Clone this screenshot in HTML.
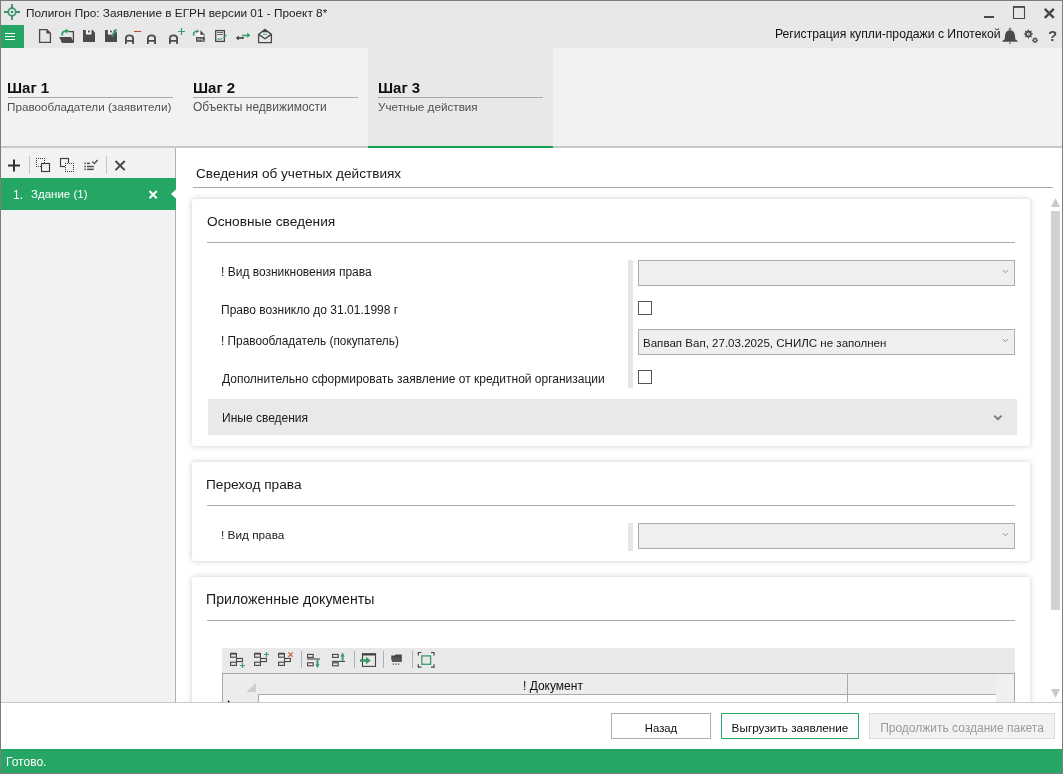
<!DOCTYPE html>
<html><head><meta charset="utf-8">
<style>
*{box-sizing:border-box;margin:0;padding:0}
html,body{-webkit-font-smoothing:antialiased;width:1063px;height:774px;overflow:hidden;background:#fff;font-family:"Liberation Sans",sans-serif;color:#1a1a1a;position:relative}
.a{position:absolute;white-space:nowrap}
.stt{font-size:15px;font-weight:700;color:#111}
.sts{font-size:11.7px;color:#505050}
.stu{height:1px;background:#a8a8a8}
.card{position:absolute;background:#fff;border-radius:2px;box-shadow:0 0 6px rgba(0,0,0,0.19),0 0 1px rgba(0,0,0,0.12)}
.hdr{font-size:13.7px;color:#1a1a1a}
.hl{position:absolute;height:1px;background:#a9a9b1}
.lbl{font-size:12px;color:#1a1a1a}
.combo{position:absolute;background:#efefef;border:1px solid #acacb4}
.chk{position:absolute;width:14px;height:14px;border:1px solid #555;background:#fff}
.btn{position:absolute;height:26px;border:1px solid #adadb5;background:#fff;font-size:12px;text-align:center;line-height:24px;padding-top:2px;color:#111}
#root{position:absolute;left:0;top:0;width:1063px;height:774px;will-change:transform}
</style></head><body><div id="root">
 <!-- title + toolbar -->
 <div class="a" style="left:0;top:0;width:1063px;height:48px;background:#e8e8e8"></div>
 <div class="a" style="left:1px;top:25px;width:23px;height:23px;background:#25a664"></div>
 <div class="a" style="left:5px;top:33px;width:10px;height:1px;background:#fff"></div>
 <div class="a" style="left:5px;top:36px;width:10px;height:1px;background:#fff"></div>
 <div class="a" style="left:5px;top:39px;width:10px;height:1px;background:#fff"></div>
 <div class="a" style="left:26px;top:6px;font-size:11.8px;color:#222">Полигон Про: Заявление в ЕГРН версии 01 - Проект 8*</div>
 <div class="a" style="left:775px;top:27px;font-size:12.2px;color:#111">Регистрация купли-продажи с Ипотекой</div>

 <!-- steps -->
 <div class="a" style="left:0;top:48px;width:1063px;height:98px;background:#f2f2f2"></div>
 <div class="a" style="left:368px;top:48px;width:185px;height:98px;background:#e8e8e8"></div>
 <div class="a" style="left:0;top:146px;width:1063px;height:2px;background:#c9c9c9"></div>
 <div class="a" style="left:368px;top:146px;width:185px;height:2px;background:#12a052"></div>

 <div class="a stt" style="left:7px;top:79px">Шаг 1</div>
 <div class="a stu" style="left:8px;top:97px;width:165px"></div>
 <div class="a sts" style="left:7px;top:100px">Правообладатели (заявители)</div>
 <div class="a stt" style="left:193px;top:79px">Шаг 2</div>
 <div class="a stu" style="left:193px;top:97px;width:165px"></div>
 <div class="a sts" style="left:193px;top:100px;font-size:12px">Объекты недвижимости</div>
 <div class="a stt" style="left:378px;top:79px">Шаг 3</div>
 <div class="a stu" style="left:378px;top:97px;width:165px"></div>
 <div class="a sts" style="left:378px;top:100px">Учетные действия</div>

 <!-- left panel -->
 <div class="a" style="left:0;top:148px;width:176px;height:554px;background:#f2f2f2;border-right:1px solid #aeaeb6"></div>
 <div class="a" style="left:29px;top:156px;width:1px;height:18px;background:#c4c4cc"></div>
 <div class="a" style="left:106px;top:156px;width:1px;height:18px;background:#c4c4cc"></div>
 <div class="a" style="left:1px;top:178px;width:175px;height:32px;background:#25a664"></div>
 <div class="a" style="left:13px;top:188px;font-size:12px;color:#fff">1.</div>
 <div class="a" style="left:31px;top:188px;font-size:11.5px;color:#fff">Здание (1)</div>

 <!-- main -->
 <div class="a hdr" style="left:196px;top:166px;font-size:13.6px">Сведения об учетных действиях</div>
 <div class="hl" style="left:193px;top:187px;width:860px"></div>

 <div class="card" style="left:192px;top:199px;width:838px;height:247px"></div>
 <div class="a hdr" style="left:207px;top:214px">Основные сведения</div>
 <div class="hl" style="left:207px;top:242px;width:808px"></div>
 <div class="a lbl" style="left:221px;top:265px">! Вид возникновения права</div>
 <div class="a lbl" style="left:221px;top:303px">Право возникло до 31.01.1998 г</div>
 <div class="a lbl" style="left:221px;top:334px;font-size:11.85px">! Правообладатель (покупатель)</div>
 <div class="a lbl" style="left:222px;top:372px">Дополнительно сформировать заявление от кредитной организации</div>
 <div class="a" style="left:628px;top:260px;width:5px;height:128px;background:#e6e6e6"></div>
 <div class="combo" style="left:638px;top:260px;width:377px;height:26px"></div>
 <div class="chk" style="left:638px;top:301px"></div>
 <div class="combo" style="left:638px;top:329px;width:377px;height:26px"></div>
 <div class="a lbl" style="left:643px;top:337px;font-size:11.55px">Вапвап Вап, 27.03.2025, СНИЛС не заполнен</div>
 <div class="chk" style="left:638px;top:370px"></div>
 <div class="a" style="left:208px;top:399px;width:809px;height:36px;background:#e9e9e9"></div>
 <div class="a lbl" style="left:222px;top:411px;font-size:12px">Иные сведения</div>

 <div class="card" style="left:192px;top:462px;width:838px;height:99px"></div>
 <div class="a hdr" style="left:206px;top:477px">Переход права</div>
 <div class="hl" style="left:207px;top:505px;width:808px"></div>
 <div class="a lbl" style="left:221px;top:528px;font-size:11.8px">! Вид права</div>
 <div class="a" style="left:628px;top:523px;width:5px;height:28px;background:#e6e6e6"></div>
 <div class="combo" style="left:638px;top:523px;width:377px;height:26px"></div>

 <div class="card" style="left:192px;top:577px;width:838px;height:200px"></div>
 <div class="a hdr" style="left:206px;top:591px;font-size:14.15px">Приложенные документы</div>
 <div class="hl" style="left:207px;top:620px;width:808px"></div>

 <!-- table -->
 <div class="a" style="left:222px;top:648px;width:793px;height:25px;background:#e9e9e9"></div>
 <div class="a" style="left:222px;top:673px;width:793px;height:40px;background:#ececec;border:1px solid #a9a9b1;border-bottom:none"></div>
 <div class="a" style="left:258px;top:694px;width:738px;height:10px;background:#fff;border-top:1px solid #a9a9b1;border-left:1px solid #a9a9b1"></div>
 <div class="a" style="left:847px;top:674px;width:1px;height:30px;background:#a9a9b1"></div>
 <div class="a" style="left:996px;top:674px;width:18px;height:30px;background:#f0f0f0"></div>
 <div class="a" style="left:523px;top:679px;font-size:12px;color:#111">! Документ</div>

 <!-- scrollbar -->
 <div class="a" style="left:1051px;top:211px;width:9px;height:399px;background:#d2d2d2"></div>

 <!-- bottom -->
 <div class="a" style="left:0;top:702px;width:1063px;height:47px;background:#fff;border-top:1px solid #c8c8cc"></div>
 <div class="btn" style="left:611px;top:713px;width:100px;font-size:11.3px">Назад</div>
 <div class="btn" style="left:721px;top:713px;width:138px;border-color:#2ea866;font-size:11.75px">Выгрузить заявление</div>
 <div class="btn" style="left:869px;top:713px;width:186px;background:#f1f3f3;border-color:#dcdcdc;color:#9a9a9a">Продолжить создание пакета</div>
 <div class="a" style="left:0;top:749px;width:1063px;height:25px;background:#25a664"></div>
 <div class="a" style="left:6px;top:755px;font-size:12px;color:#fff">Готово.</div>

 <div class="a" style="left:1048px;top:27px;font-size:15px;font-weight:700;color:#4a4a4a">?</div>
 <!-- window border -->
 <div class="a" style="left:0;top:0;width:1063px;height:774px;border:1px solid #7d7d7d"></div>

 <svg class="a" style="left:0;top:0" width="1063" height="774" viewBox="0 0 1063 774">
  <!-- logo -->
  <g stroke="#38936a" fill="none">
   <circle cx="12" cy="12" r="3.8" stroke-width="1.7"/>
   <path d="M4 12H8.2M15.8 12H20M12 4V8.2M12 15.8V20" stroke-width="1.8"/>
  </g>
  <circle cx="12" cy="12" r="1.35" fill="#38936a"/>
  <!-- toolbar icons -->
  <g fill="none" stroke="#474747" stroke-width="1.3">
   <path d="M39.6 29.6H46.8L50.4 33.2V42.4H39.6Z"/>
   <path d="M68.5 31.6H73.4V42.4"/>
  </g>
  <path d="M46.4 29.2V33.6H50.8Z" fill="#474747"/>
  <path d="M59.2 37H71.2L73.9 43H62Z" fill="#4a4a4a"/>
  <path d="M62.6 35.6C61.2 33.2 63 31 66.4 31" fill="none" stroke="#27a563" stroke-width="1.8"/>
  <path d="M65.8 28.6L69.2 31L65.8 33.4Z" fill="#27a563"/>
  <path d="M83 30H92.6L95 32.4V42H83Z" fill="#4a4a4a"/>
  <rect x="85.9" y="30" width="5.6" height="4.5" fill="#f4f4f4"/>
  <rect x="88" y="30.6" width="1.8" height="1.8" fill="#4a4a4a"/>
  <path d="M105 30H114.6L117 32.4V42H105Z" fill="#4a4a4a"/>
  <rect x="107.9" y="30" width="5.6" height="4.5" fill="#f4f4f4"/>
  <rect x="110" y="30.6" width="1.8" height="1.8" fill="#4a4a4a"/>
  <path d="M111.8 36.4L116.2 29.4" stroke="#3f9e6c" stroke-width="2.2"/>
  <g fill="none" stroke="#4a4a4a" stroke-width="1.8">
   <path d="M125.9 44V38.4Q125.9 35.4 129.5 35.4Q133.1 35.4 133.1 38.4V44M125.9 40.8H133.1"/>
   <path d="M147.9 44V38.4Q147.9 35.4 151.5 35.4Q155.1 35.4 155.1 38.4V44M147.9 40.8H155.1"/>
   <path d="M169.9 44V38.4Q169.9 35.4 173.5 35.4Q177.1 35.4 177.1 38.4V44M169.9 40.8H177.1"/>
  </g>
  <path d="M134 31.5H141.1" stroke="#b8502f" stroke-width="1.1"/>
  <path d="M178 31.5H185M181.5 28V35" stroke="#3a9a6a" stroke-width="1.2"/>
  <!-- xml -->
  <path d="M197 31H200.8L204.6 34.8V37H197Z" fill="#f7f7f7"/>
  <path d="M200.4 30.3L204.8 34.7H200.4Z" fill="#474747"/>
  <path d="M204.2 34.7V37.2" stroke="#6a6a6a" stroke-width="1"/>
  <rect x="196" y="37" width="8.8" height="4.8" rx="0.6" fill="#4a4a4a"/>
  <path d="M197.2 38.4L198.8 40.4M198.8 38.4L197.2 40.4M199.6 40.4V38.4L200.6 39.6L201.6 38.4V40.4M202.4 38.4V40.4H204" stroke="#e6e6e6" stroke-width="0.6" fill="none"/>
  <path d="M194 35.6C192.6 33.2 194.3 31.3 197 31.3" fill="none" stroke="#3a9a6a" stroke-width="1.5"/>
  <path d="M196.6 29.3L199.4 31.3L196.6 33.3Z" fill="#3a9a6a"/>
  <!-- sign doc -->
  <rect x="215.7" y="30.6" width="8.7" height="10.8" fill="none" stroke="#474747" stroke-width="1.3"/>
  <path d="M217.2 32.5H223M217.2 34.5H223" stroke="#666" stroke-width="1"/>
  <path d="M217.3 39.6L219 38.8L220.5 39.2L222.4 38.4M223.4 37.6L226.6 35.2" stroke="#3a9a6a" stroke-width="1.1" fill="none"/>
  <!-- arrows -->
  <path d="M242 35.5H247.6" stroke="#3a9a6a" stroke-width="1.6"/>
  <path d="M247.2 32.5L250.4 35.3L247.2 38Z" fill="#3a9a6a"/>
  <path d="M238.6 38H244" stroke="#3a3a3a" stroke-width="1.6"/>
  <path d="M238.8 35.4L235.9 38L238.8 40.6Z" fill="#3a3a3a"/>
  <!-- envelope -->
  <path d="M258.6 34.4L265 29.4L271.4 34.4V42.6H258.6Z" fill="none" stroke="#474747" stroke-width="1.3"/>
  <path d="M258.6 34.4L265 38.8L271.4 34.4" fill="none" stroke="#474747" stroke-width="1.3"/>
  <path d="M261.5 32.2L265 29.4L268.5 32.2Z" fill="#474747"/>
  <path d="M263 34.3H267" stroke="#4fae7e" stroke-width="1"/>
  <!-- window controls -->
  <rect x="984" y="16" width="10" height="2" fill="#474747"/>
  <path d="M1013.5 18.5V6.8H1024.5V18.5H1013.5Z" fill="none" stroke="#474747" stroke-width="1.1"/>
  <rect x="1013" y="6" width="12" height="1.8" fill="#474747"/>
  <path d="M1044.8 8.8L1053.8 17.8M1053.8 8.8L1044.8 17.8" stroke="#474747" stroke-width="2.4"/>
  <!-- bell -->
  <circle cx="1010" cy="29" r="0.9" fill="none" stroke="#4a4a4a" stroke-width="0.8"/>
  <path d="M1002.2 41.8Q1002.2 40.6 1004.6 39.6L1005.1 35.2C1005.4 31.8 1007.2 30.2 1010 30.2C1012.8 30.2 1014.6 31.8 1014.9 35.2L1015.4 39.6Q1017.8 40.6 1017.8 41.8Z" fill="#4a4a4a"/>
  <rect x="1009" y="42.6" width="2" height="1" fill="#4a4a4a"/>
  <!-- gears -->
  <g fill="#4a4a4a">
   <circle cx="1028.4" cy="34" r="3.3"/>
   <path d="M1028.4 29L1029.3 31H1027.5ZM1028.4 39L1029.3 37H1027.5ZM1023.4 34L1025.4 34.9V33.1ZM1033.4 34L1031.4 34.9V33.1ZM1024.9 30.5L1027 31.3L1025.7 32.6ZM1031.9 37.5L1029.8 36.7L1031.1 35.4ZM1031.9 30.5L1031.1 32.6L1029.8 31.3ZM1024.9 37.5L1025.7 35.4L1027 36.7Z"/>
   <circle cx="1035" cy="40.3" r="2.2"/>
   <path d="M1035 37.4V43.2M1032.1 40.3H1037.9M1033 38.3L1037 42.3M1037 38.3L1033 42.3" stroke="#4a4a4a" stroke-width="1"/>
  </g>
  <circle cx="1028.4" cy="34" r="1.5" fill="#e8e8e8"/>
  <circle cx="1028.4" cy="34" r="0.6" fill="#4a4a4a"/>
  <circle cx="1035" cy="40.3" r="1" fill="#e8e8e8"/>
  <!-- left toolbar -->
  <path d="M8 165.5H20M14 159.5V171.5" stroke="#333" stroke-width="2"/>
  <path d="M36 158h1v1h-1zM36 160h1v1h-1zM36 162h1v1h-1zM36 164h1v1h-1zM36 166h1v1h-1zM38 158h1v1h-1zM38 166h1v1h-1zM40 158h1v1h-1zM40 166h1v1h-1zM42 158h1v1h-1zM42 166h1v1h-1zM44 158h1v1h-1zM44 160h1v1h-1zM44 162h1v1h-1zM44 164h1v1h-1zM44 166h1v1h-1z" fill="#3c3c3c"/>
  <rect x="41.5" y="163.5" width="8" height="8" fill="#f2f2f2" stroke="#3c3c3c" stroke-width="1.15"/>
  <rect x="60.5" y="158.5" width="8" height="8" fill="none" stroke="#3c3c3c" stroke-width="1.15"/>
  <rect x="65" y="163" width="9" height="9" fill="#f2f2f2"/>
  <path d="M65 163h1v1h-1zM65 165h1v1h-1zM65 167h1v1h-1zM65 169h1v1h-1zM65 171h1v1h-1zM67 163h1v1h-1zM67 171h1v1h-1zM69 163h1v1h-1zM69 171h1v1h-1zM71 163h1v1h-1zM71 171h1v1h-1zM73 163h1v1h-1zM73 165h1v1h-1zM73 167h1v1h-1zM73 169h1v1h-1zM73 171h1v1h-1z" fill="#3c3c3c"/>
  <g fill="#4d4d4d">
   <rect x="84.3" y="162.6" width="1.6" height="1.5"/><rect x="84.3" y="165.8" width="1.6" height="1.5"/><rect x="84.3" y="168.6" width="1.6" height="1.5"/>
   <rect x="87" y="162.6" width="3" height="1.5"/><rect x="87" y="165.8" width="6.8" height="1.5"/><rect x="87" y="168.6" width="6.8" height="1.5"/>
  </g>
  <path d="M92.2 161.6L94.4 163.6L97.6 160" fill="none" stroke="#4d4d4d" stroke-width="1.3"/>
  <path d="M115.5 161L124.7 170.2M124.7 161L115.5 170.2" stroke="#444" stroke-width="1.9"/>
  <!-- item X + notch -->
  <path d="M149.5 191L156.7 198.2M156.7 191L149.5 198.2" stroke="#fff" stroke-width="2"/>
  <path d="M177 188.4L171 194L177 199.6Z" fill="#fff"/>
  <!-- combo chevrons -->
  <path d="M1003 270.2L1005.5 272.7L1008 270.2M1003 339.2L1005.5 341.7L1008 339.2M1003 533.2L1005.5 535.7L1008 533.2" fill="none" stroke="#8a8a8a" stroke-width="1"/>
  <path d="M994.2 415.6L997.9 419.2L1001.6 415.6" fill="none" stroke="#7a7a7a" stroke-width="1.9"/>
  <!-- scrollbar arrows -->
  <path d="M1051 207L1055.5 198L1060 207Z" fill="#c9c9c9"/>
  <path d="M1051 689L1060 689L1055.5 698Z" fill="#c9c9c9"/>
  <!-- table toolbar -->
  <g fill="none" stroke="#444" stroke-width="1.1">
   <rect x="230.6" y="653.6" width="5.8" height="3.6"/><rect x="236.6" y="658.4" width="5.8" height="3.2"/><rect x="230.6" y="662.2" width="5.8" height="3.2"/>
   <rect x="254.6" y="653.6" width="5.8" height="3.6"/><rect x="260.6" y="658.4" width="5.8" height="3.2"/><rect x="254.6" y="662.2" width="5.8" height="3.2"/>
   <rect x="278.6" y="653.6" width="5.8" height="3.6"/><rect x="284.6" y="658.4" width="5.8" height="3.2"/><rect x="278.6" y="662.2" width="5.8" height="3.2"/>
   <rect x="307.6" y="654.4" width="5.6" height="3"/><rect x="307.6" y="662.8" width="5.6" height="3"/><path d="M307 659H320"/>
   <rect x="332.6" y="654.4" width="5.6" height="3"/><rect x="332.6" y="662.8" width="5.6" height="3"/><path d="M332 661.4H345"/>
  </g>
  <path d="M230.6 653.6H236.4M254.6 653.6H260.4M278.6 653.6H284.4" stroke="#444" stroke-width="1.8"/>
  <path d="M240 665.5H245M242.5 663V668" stroke="#3a9a6a" stroke-width="1.2"/>
  <path d="M264 654.5H269M266.5 652V657" stroke="#3a9a6a" stroke-width="1.2"/>
  <path d="M288.4 652.4L292.8 656.8M292.8 652.4L288.4 656.8" stroke="#c0603a" stroke-width="1.2"/>
  <path d="M317.5 660V665" stroke="#3a9a6a" stroke-width="2"/><path d="M315.3 664.4L317.5 668L319.7 664.4Z" fill="#3a9a6a"/>
  <path d="M342.6 656V660.5" stroke="#3a9a6a" stroke-width="2"/><path d="M340.4 656.4L342.6 652.6L344.8 656.4Z" fill="#3a9a6a"/>
  <g stroke="#a9b1bd" stroke-width="1"><path d="M301.5 651V668M354.5 651V668M383.5 651V668M412.5 651V668"/></g>
  <rect x="362.5" y="654" width="13" height="12.4" fill="none" stroke="#444" stroke-width="1.1"/>
  <rect x="362" y="653.3" width="14" height="2.2" fill="#444"/>
  <rect x="360" y="659.2" width="6.5" height="2.6" fill="#3a9a6a"/><path d="M366 656.8L370.8 660.5L366 664.2Z" fill="#3a9a6a"/>
  <path d="M391.2 655.5H394.5L395.5 654.4H401.8V661.8H392Z" fill="#474747"/>
  <path d="M391 657.6H400.6L401.8 661.8H392.2Z" fill="#555"/>
  <path d="M392.5 664.2H393.8M395.2 664.2H396.5M397.9 664.2H399.2" stroke="#555" stroke-width="1.2"/>
  <path d="M418.3 655.6V652.5H421.4M431 652.5H434V655.6M434 664.2V667.2H431M421.4 667.2H418.3V664.2" fill="none" stroke="#444" stroke-width="1.2"/>
  <rect x="421.8" y="655.9" width="8.8" height="8.4" fill="none" stroke="#3a9a6a" stroke-width="1.3"/>
  <circle cx="228.6" cy="701.4" r="0.9" fill="#111"/>
  <!-- table corner triangle -->
  <path d="M246.5 692H256V682.4Z" fill="#cfcfcf"/>
 </svg>
</div></body></html>
